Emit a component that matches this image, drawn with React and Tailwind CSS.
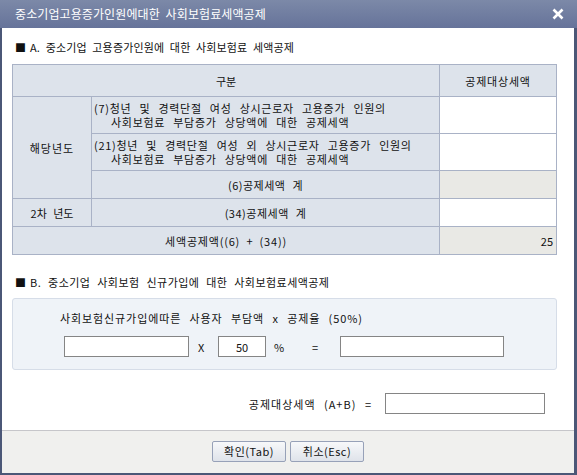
import React from "react";

const F = { fontFamily: '"Noto Sans CJK KR", "Noto Sans", sans-serif' };

function Input({ className = "", value = "" }) {
  return (
    <div className={`h-[21px] border border-[#858585] bg-white flex items-center justify-center text-[11px] ${className}`}>
      {value}
    </div>
  );
}

export default function App() {
  return (
    <div style={F} className="w-[577px] h-[475px] bg-[#4b5777] flex flex-col pl-[2px] pr-[3px] pb-[2px] text-[11px] leading-[14px] text-[#111] [word-spacing:3px]">
      {/* title bar */}
      <div className="h-[28px] shrink-0 -ml-[2px] -mr-[3px] bg-gradient-to-b from-[#7c89a8] to-[#66739a] flex items-center justify-between pl-[15px] pr-[10px] text-white text-[12px]">
        <span className="[letter-spacing:0.1px]">중소기업고용증가인원에대한 사회보험료세액공제</span>
        <svg width="12" height="12" viewBox="0 0 12 12" className="mr-[3px]">
          <path d="M1.5 1.5 L10.5 10.5 M10.5 1.5 L1.5 10.5" stroke="white" strokeWidth="2.6" />
        </svg>
      </div>

      {/* body */}
      <div className="h-[402px] shrink-0 bg-white flex flex-col pl-[10px] pr-[17px]">
        <div className="pt-[12px] pl-[3px] h-[26px] flex items-start">
          <span className="mr-[4px]">■</span>
          <span className="[letter-spacing:0.15px] [word-spacing:3px]">A. 중소기업 고용증가인원에 대한 사회보험료 세액공제</span>
        </div>

        {/* table */}
        <div className="mt-[10px] grid grid-cols-[78px_347px_116px] grid-rows-[31px_36px_36px_27px_27px_27px] gap-px bg-[#a9b2c6] p-px w-[545px]">
          <div className="col-span-2 bg-[#dde3eb] flex items-center justify-center">구분</div>
          <div className="bg-[#dde3eb] flex items-center justify-center [letter-spacing:0.8px]">공제대상세액</div>

          <div className="row-span-3 bg-[#dde3eb] flex items-center justify-center [letter-spacing:1px]">해당년도</div>
          <div className="bg-[#dde3eb] flex flex-col justify-center gap-0 pl-[2px] [letter-spacing:0.7px] [word-spacing:5px]">
            <span className="block h-[14px] leading-[14px]">(7)청년 및 경력단절 여성 상시근로자 고용증가 인원의</span>
            <span className="block h-[14px] leading-[14px] pl-[17px]">사회보험료 부담증가 상당액에 대한 공제세액</span>
          </div>
          <div className="bg-white"></div>

          <div className="bg-[#dde3eb] flex flex-col justify-center gap-0 pl-[2px] [letter-spacing:0.7px] [word-spacing:5px]">
            <span className="block h-[14px] leading-[14px]">(21)청년 및 경력단절 여성 외 상시근로자 고용증가 인원의</span>
            <span className="block h-[14px] leading-[14px] pl-[17px]">사회보험료 부담증가 상당액에 대한 공제세액</span>
          </div>
          <div className="bg-white"></div>

          <div className="bg-[#dde3eb] flex items-center justify-center [letter-spacing:0.5px] [word-spacing:4px]">(6)공제세액 계</div>
          <div className="bg-[#e9e9e5]"></div>

          <div className="bg-[#dde3eb] flex items-center justify-center [word-spacing:4px]">2차 년도</div>
          <div className="bg-[#dde3eb] flex items-center justify-center [letter-spacing:0.5px] [word-spacing:4px]">(34)공제세액 계</div>
          <div className="bg-white"></div>

          <div className="col-span-2 bg-[#dde3eb] flex items-center justify-center [letter-spacing:0.8px] [word-spacing:3px]">세액공제액((6) + (34))</div>
          <div className="bg-[#e9e9e5] flex items-center justify-end pr-[3px]">25</div>
        </div>

        <div className="mt-[20px] pl-[3px] h-[14px] flex items-center">
          <span className="mr-[4px]">■</span>
          <span className="[letter-spacing:0.45px] [word-spacing:4px]">B. 중소기업 사회보험 신규가입에 대한 사회보험료세액공제</span>
        </div>

        {/* box B */}
        <div className="mt-[9px] h-[72px] w-[545px] rounded-[3px] border border-[#d6dde8] bg-[#eff3f8] flex flex-col pl-[47px] pt-[12px]">
          <div className="h-[14px] [letter-spacing:0.9px] [word-spacing:5px]">사회보험신규가입에따른 사용자 부담액 x 공제율 (50%)</div>
          <div className="mt-[11px] flex items-center pl-[4px]">
            <Input className="w-[125px]" />
            <span className="ml-[9px] w-[20px]">X</span>
            <Input className="w-[48px]" value="50" />
            <span className="ml-[8px] w-[38px]">%</span>
            <span className="w-[28px]">=</span>
            <Input className="w-[164px]" />
          </div>
        </div>

        <div className="mt-[23px] flex items-center justify-end pr-[12px]">
          <span className="mr-[13px] [letter-spacing:1px] [word-spacing:5px]">공제대상세액 (A+B) =</span>
          <Input className="w-[160px]" />
        </div>
      </div>

      <div className="h-px shrink-0 bg-[#c6c6ca]"></div>

      {/* footer */}
      <div className="flex-1 bg-[#f0f0ee] flex items-start justify-center gap-[4px] pt-[10px]">
        <button className="w-[74px] h-[21px] rounded-[2px] border border-[#97a1b8] bg-gradient-to-b from-[#f7f8fa] to-[#dfe3ea] text-[11px] leading-none [letter-spacing:0.5px]">확인(Tab)</button>
        <button className="w-[74px] h-[21px] rounded-[2px] border border-[#97a1b8] bg-gradient-to-b from-[#f7f8fa] to-[#dfe3ea] text-[11px] leading-none [letter-spacing:0.5px]">취소(Esc)</button>
      </div>
    </div>
  );
}
